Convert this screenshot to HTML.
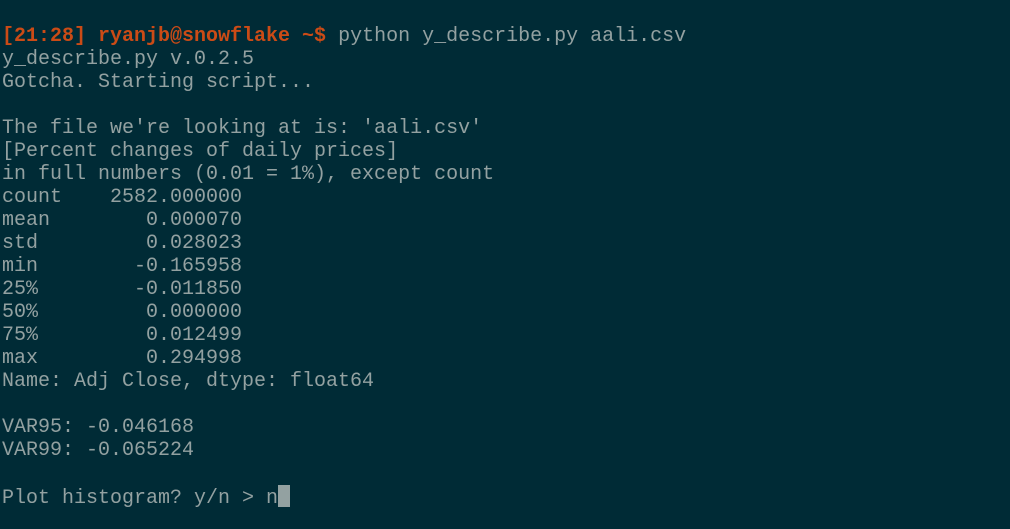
<!DOCTYPE html>
<html><head><style>
html,body{margin:0;padding:0;width:1010px;height:529px;background:#002b36;overflow:hidden}
pre{margin:0;position:absolute;left:2px;top:25px;font-family:"Liberation Mono","DejaVu Sans Mono",monospace;font-size:20px;line-height:23px;color:#93a1a1;letter-spacing:0}
.p{color:#cb4b16;font-weight:bold}
.c{display:inline-block;width:12px;height:22px;background:#93a1a1;vertical-align:-4px}
</style></head><body>
<pre><span class="p">[21:28] ryanjb@snowflake ~$</span> python y_describe.py aali.csv
y_describe.py v.0.2.5
Gotcha. Starting script...

The file we're looking at is: 'aali.csv'
[Percent changes of daily prices]
in full numbers (0.01 = 1%), except count
count    2582.000000
mean        0.000070
std         0.028023
min        -0.165958
25%        -0.011850
50%         0.000000
75%         0.012499
max         0.294998
Name: Adj Close, dtype: float64

VAR95: -0.046168
VAR99: -0.065224

Plot histogram? y/n &gt; n<span class="c"></span></pre>
</body></html>
